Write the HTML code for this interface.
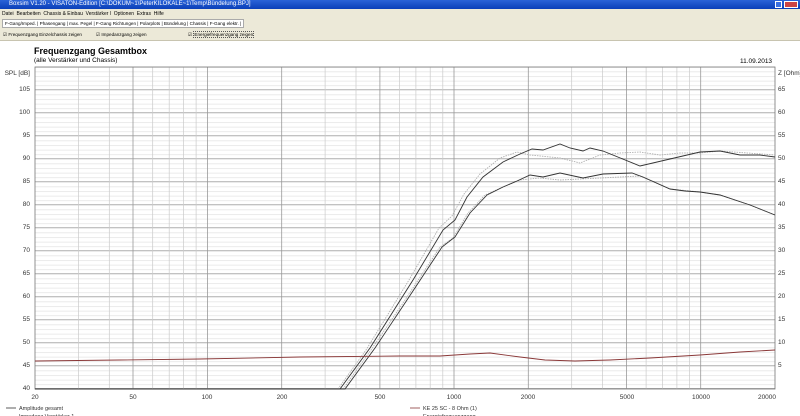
<!DOCTYPE html>
<html><head><meta charset="utf-8"><style>
*{margin:0;padding:0;box-sizing:border-box}
body{width:800px;height:416px;overflow:hidden;background:#fff;font-family:"Liberation Sans",sans-serif;position:relative}
.tb{position:absolute;left:0;top:0;width:800px;height:9px;background:linear-gradient(#2a63d8,#0a3fb8);color:#fff;font-size:6px;line-height:9px;padding-left:9px}
.bar{position:absolute;left:0;top:9px;width:800px;height:32px;background:#ece9d8;border-bottom:1px solid #c8c4b0;font-size:5px;color:#000}
.t{position:absolute;white-space:nowrap}
</style></head><body>
<div class="tb">Boxsim V1.20 - VISATON-Edition [C:\DOKUM~1\PeterKILOKALE~1\Temp\Bündelung.BPJ]
<span style="position:absolute;right:2px;top:1px;width:14px;height:7px;background:#c44;border:1px solid #fff"></span><span style="position:absolute;right:18px;top:1px;width:7px;height:7px;background:#3a6fe0;border:1px solid #fff"></span></div>
<div class="bar">
<div class="t" style="left:2px;top:2px">Datei &nbsp;Bearbeiten &nbsp;Chassis &amp; Einbau &nbsp;Verstärker l &nbsp;Optionen &nbsp;Extras &nbsp;Hilfe</div>
<div class="t" style="left:2px;top:10px;border:1px solid #aaa;padding:1px 2px;background:#fff;font-size:4.6px">F-Gang/Imped. | Phasengang | max. Pegel | F-Gang Richtungen | Polarplots | Bündelung | Chassis | F-Gang elektr. |</div>
<div class="t" style="left:3px;top:23px;font-size:4.6px">☑ Frequenzgang Einzelchassis zeigen</div>
<div class="t" style="left:96px;top:23px;font-size:4.6px">☑ Impedanzgang zeigen</div>
<div class="t" style="left:188px;top:23px;font-size:4.6px">☑ <span style="border:1px dotted #555">Energiefrequenzgang zeigen</span></div>
</div>
<div class="t" style="left:34px;top:46px;font-size:9px;font-weight:bold">Frequenzgang Gesamtbox</div>
<div class="t" style="left:34px;top:57px;font-size:6.5px">(alle Verstärker und Chassis)</div>
<div class="t" style="left:740px;top:58px;font-size:6.5px">11.09.2013</div>
<svg width="800" height="416" style="position:absolute;left:0;top:0" font-family="Liberation Sans" font-size="6.5" fill="#333">
<defs>
<pattern id="h" x="0" y="67" width="10" height="4.6" patternUnits="userSpaceOnUse"><line x1="0" y1="0.3" x2="10" y2="0.3" stroke="#dcdcdc" stroke-width="0.6"/></pattern>
<pattern id="H" x="0" y="89" width="10" height="23" patternUnits="userSpaceOnUse"><line x1="0" y1="0.3" x2="10" y2="0.3" stroke="#a8a8a8" stroke-width="0.8"/></pattern>
</defs>
<rect x="35" y="67" width="740" height="322" fill="url(#h)"/>
<rect x="35" y="67" width="740" height="322" fill="url(#H)"/>
<g stroke="#cacaca" stroke-width="0.7">
<line x1="78.4" y1="67" x2="78.4" y2="389"/><line x1="109.3" y1="67" x2="109.3" y2="389"/><line x1="152.7" y1="67" x2="152.7" y2="389"/><line x1="169.2" y1="67" x2="169.2" y2="389"/><line x1="183.5" y1="67" x2="183.5" y2="389"/><line x1="196.1" y1="67" x2="196.1" y2="389"/>
<line x1="325.1" y1="67" x2="325.1" y2="389"/><line x1="356" y1="67" x2="356" y2="389"/><line x1="399.4" y1="67" x2="399.4" y2="389"/><line x1="415.9" y1="67" x2="415.9" y2="389"/><line x1="430.2" y1="67" x2="430.2" y2="389"/><line x1="442.8" y1="67" x2="442.8" y2="389"/>
<line x1="571.7" y1="67" x2="571.7" y2="389"/><line x1="602.6" y1="67" x2="602.6" y2="389"/><line x1="646.1" y1="67" x2="646.1" y2="389"/><line x1="662.6" y1="67" x2="662.6" y2="389"/><line x1="676.9" y1="67" x2="676.9" y2="389"/><line x1="689.5" y1="67" x2="689.5" y2="389"/>
</g>
<g stroke="#999" stroke-width="0.8">
<line x1="133" y1="67" x2="133" y2="389"/><line x1="207.4" y1="67" x2="207.4" y2="389"/><line x1="281.7" y1="67" x2="281.7" y2="389"/><line x1="379.9" y1="67" x2="379.9" y2="389"/><line x1="454" y1="67" x2="454" y2="389"/><line x1="528.3" y1="67" x2="528.3" y2="389"/><line x1="626.6" y1="67" x2="626.6" y2="389"/><line x1="700.7" y1="67" x2="700.7" y2="389"/>
</g>
<rect x="35" y="67" width="740" height="322" fill="none" stroke="#777" stroke-width="0.8"/>
<g text-anchor="end"><text x="30" y="75">SPL [dB]</text><text x="30" y="91">105</text><text x="30" y="114">100</text><text x="30" y="137">95</text><text x="30" y="160">90</text><text x="30" y="183">85</text><text x="30" y="206">80</text><text x="30" y="229">75</text><text x="30" y="252">70</text><text x="30" y="275">65</text><text x="30" y="298">60</text><text x="30" y="321">55</text><text x="30" y="344">50</text><text x="30" y="367">45</text><text x="30" y="390">40</text></g>
<g><text x="778" y="75">Z [Ohm]</text><text x="778" y="91">65</text><text x="778" y="114">60</text><text x="778" y="137">55</text><text x="778" y="160">50</text><text x="778" y="183">45</text><text x="778" y="206">40</text><text x="778" y="229">35</text><text x="778" y="252">30</text><text x="778" y="275">25</text><text x="778" y="298">20</text><text x="778" y="321">15</text><text x="778" y="344">10</text><text x="778" y="367">5</text></g>
<g text-anchor="middle"><text x="35" y="399">20</text><text x="133" y="399">50</text><text x="207" y="399">100</text><text x="282" y="399">200</text><text x="380" y="399">500</text><text x="454" y="399">1000</text><text x="528" y="399">2000</text><text x="627" y="399">5000</text><text x="701" y="399">10000</text><text x="767" y="399">20000</text></g>
<g fill="none" stroke-width="0.9">
<path stroke="#b0b0b0" stroke-dasharray="1.5,1" d="M338,389 L366,350 L409,280 L439,228 L452,216 L464,194 L480,174 L500,158 L517,152 L530,155 L560,158 L580,163 L600,155 L620,153 L640,152 L660,155 L680,153 L700,153 L720,151 L775,155"/>
<path stroke="#b0b0b0" stroke-dasharray="1.5,1" d="M343,389 L371,350 L405,300 L440,247 L453,238 L468,213 L485,195 L503,187 L520,180 L540,178 L560,180 L600,178 L640,176 L670,189 L700,192 L720,195 L750,205 L775,215"/>
<path stroke="#333" d="M35,389 L340,389 L370,348 L413,280 L443,230 L455,220 L467,197 L483,177 L503,162 L520,154 L532,149 L543,150 L560,144 L570,148 L583,151 L590,148 L603,151 L640,166 L670,159 L700,152 L720,151 L740,155 L760,155 L775,157"/>
<path stroke="#333" d="M35,389 L345,389 L375,348 L407,300 L442,247 L455,237 L470,213 L487,195 L503,187 L517,181 L530,175 L543,177 L560,173 L583,178 L603,174 L632,173 L643,177 L670,189 L685,191 L700,192 L720,195 L750,205 L775,215"/>
<path stroke="#8a3838" d="M35,361 L120,360 L200,359 L300,357 L400,356 L440,356 L470,354 L490,353 L520,357 L545,360 L575,361 L610,360 L650,358 L700,355 L740,352 L775,350"/>
</g>
<g font-size="5.5" fill="#333"><line x1="6" y1="408" x2="16" y2="408" stroke="#333" stroke-width="0.8"/><text x="19" y="410">Amplitude gesamt</text><text x="19" y="418">Impedanz Verstärker 1</text>
<line x1="410" y1="408" x2="420" y2="408" stroke="#8a3838" stroke-width="0.8"/><text x="423" y="410">KE 25 SC - 8 Ohm   (1)</text><text x="423" y="418">Energiefrequenzgang</text></g>
</svg>
</body></html>
